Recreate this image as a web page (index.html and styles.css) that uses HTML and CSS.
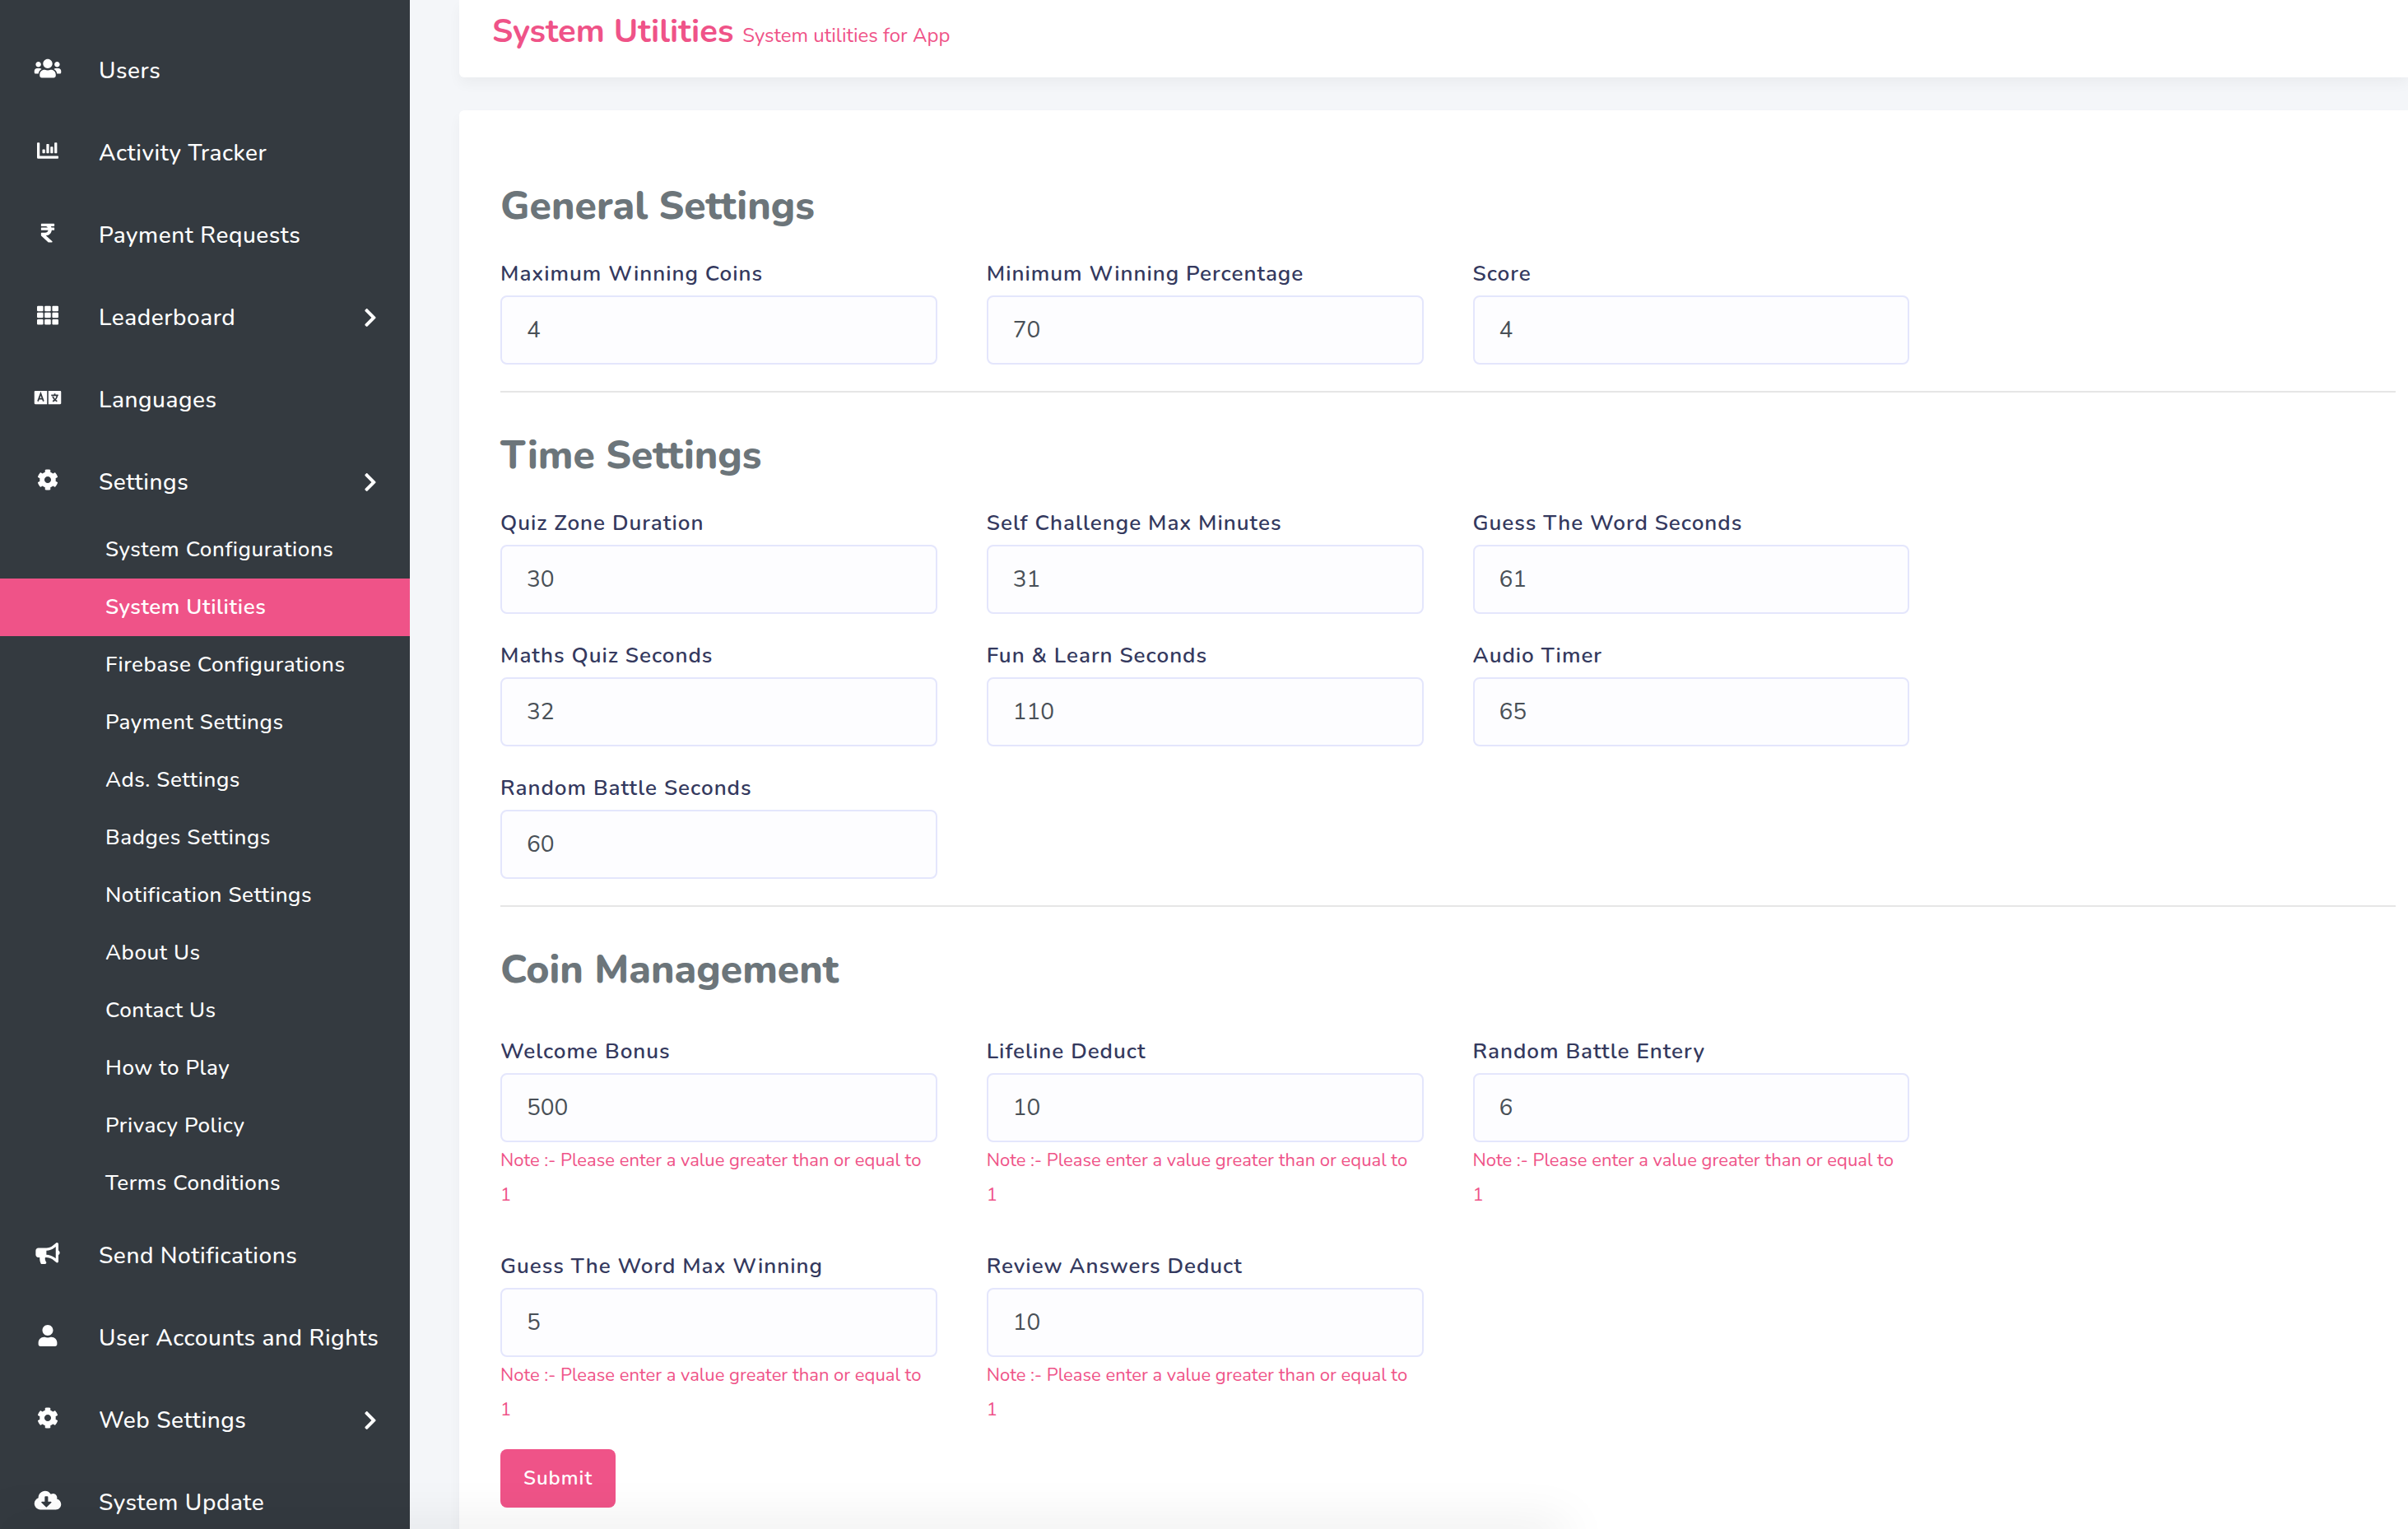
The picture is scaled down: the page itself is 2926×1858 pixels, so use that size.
FILE: index.html
```html
<!DOCTYPE html>
<html lang="en">
<head>
<meta charset="utf-8">
<meta name="viewport" content="width=device-width, initial-scale=1">
<title>System Utilities</title>
<link rel="stylesheet" href="styles.css">
</head>
<body>
<svg class="sprite" aria-hidden="true">
  <symbol id="i-users" viewBox="0 0 640 512"><path d="M96 224c35.3 0 64-28.7 64-64s-28.7-64-64-64-64 28.7-64 64 28.7 64 64 64zm448 0c35.3 0 64-28.7 64-64s-28.7-64-64-64-64 28.7-64 64 28.7 64 64 64zm32 32h-64c-17.6 0-33.5 7.1-45.1 18.6 40.3 22.1 68.9 62 75.1 109.4h66c17.7 0 32-14.3 32-32v-32c0-35.3-28.7-64-64-64zm-256 0c61.9 0 112-50.1 112-112S381.9 32 320 32 208 82.1 208 144s50.1 112 112 112zm76.8 32h-8.3c-20.8 10-43.9 16-68.5 16s-47.6-6-68.5-16h-8.3C179.6 288 128 339.6 128 403.2V432c0 26.5 21.5 48 48 48h288c26.5 0 48-21.5 48-48v-28.8c0-63.6-51.6-115.2-115.2-115.2zm-223.7-13.4C161.5 263.1 145.6 256 128 256H64c-35.3 0-64 28.7-64 64v32c0 17.7 14.3 32 32 32h65.9c6.3-47.4 34.9-87.3 75.2-109.4z"/></symbol>
  <symbol id="i-chart" viewBox="0 0 512 512"><path d="M332.8 320h38.4c6.4 0 12.8-6.4 12.8-12.8V172.8c0-6.4-6.4-12.8-12.8-12.8h-38.4c-6.4 0-12.8 6.4-12.8 12.8v134.4c0 6.4 6.4 12.8 12.8 12.8zm96 0h38.4c6.4 0 12.8-6.4 12.8-12.8V76.8c0-6.4-6.4-12.8-12.8-12.8h-38.4c-6.4 0-12.8 6.4-12.8 12.8v230.4c0 6.4 6.4 12.8 12.8 12.8zm-288 0h38.4c6.4 0 12.8-6.4 12.8-12.8v-70.4c0-6.4-6.4-12.8-12.8-12.8h-38.4c-6.4 0-12.8 6.4-12.8 12.8v70.4c0 6.4 6.4 12.8 12.8 12.8zm96 0h38.4c6.4 0 12.8-6.4 12.8-12.8V108.8c0-6.4-6.4-12.8-12.8-12.8h-38.4c-6.4 0-12.8 6.4-12.8 12.8v198.4c0 6.4 6.4 12.8 12.8 12.8zM496 384H64V80c0-8.84-7.16-16-16-16H16C7.16 64 0 71.16 0 80v336c0 17.67 14.33 32 32 32h464c8.84 0 16-7.16 16-16v-32c0-8.84-7.16-16-16-16z"/></symbol>
  <symbol id="i-rupee" viewBox="0 0 320 512"><path d="M308 96c6.627 0 12-5.373 12-12V44c0-6.627-5.373-12-12-12H12C5.373 32 0 37.373 0 44v44.748c0 6.627 5.373 12 12 12h85.28c27.308 0 48.261 9.958 60.97 27.252H12c-6.627 0-12 5.373-12 12v40c0 6.627 5.373 12 12 12h158.757c-6.217 36.086-32.961 58.632-74.757 58.632H12c-6.627 0-12 5.373-12 12v53.012c0 3.349 1.4 6.546 3.861 8.818l165.052 152.356a12.001 12.001 0 0 0 8.139 3.182h82.562c10.924 0 16.166-13.408 8.139-20.818L116.871 319.906c76.499-2.34 131.144-53.395 138.318-127.906H308c6.627 0 12-5.373 12-12v-40c0-6.627-5.373-12-12-12h-58.69c-3.486-11.541-8.28-22.246-14.252-32H308z"/></symbol>
  <symbol id="i-grid" viewBox="0 0 512 512">
    <rect x="0" y="32" width="149" height="128" rx="24"/><rect x="181" y="32" width="149" height="128" rx="24"/><rect x="363" y="32" width="149" height="128" rx="24"/>
    <rect x="0" y="192" width="149" height="128" rx="24"/><rect x="181" y="192" width="149" height="128" rx="24"/><rect x="363" y="192" width="149" height="128" rx="24"/>
    <rect x="0" y="352" width="149" height="128" rx="24"/><rect x="181" y="352" width="149" height="128" rx="24"/><rect x="363" y="352" width="149" height="128" rx="24"/>
  </symbol>
  <symbol id="i-language" viewBox="0 0 640 512">
    <path d="M24 96h280v320H24c-13 0-24-11-24-24V120c0-13 11-24 24-24zM336 96h280c13 0 24 11 24 24v272c0 13-11 24-24 24H336z"/>
    <g class="cut"><path d="M84 348l68-184 68 184M108 290h88"/><path d="M404 204h168M488 160v44M440 350c60-30 96-78 106-142M438 232c20 52 56 92 106 118"/></g>
  </symbol>
  <symbol id="i-cog" viewBox="0 0 512 512"><path d="M487.4 315.7l-42.6-24.6c4.3-23.2 4.3-47 0-70.2l42.6-24.6c4.9-2.8 7.1-8.6 5.5-14-11.1-35.6-30-67.8-54.7-94.6-3.8-4.1-10-5.1-14.8-2.3L380.8 110c-17.9-15.4-38.5-27.3-60.8-35.1V25.8c0-5.6-3.9-10.5-9.4-11.7-36.7-8.2-74.3-7.8-109.2 0-5.5 1.2-9.4 6.1-9.4 11.7V75c-22.2 7.9-42.8 19.8-60.8 35.1L88.7 85.5c-4.9-2.8-11-1.9-14.8 2.3-24.7 26.7-43.6 58.9-54.7 94.6-1.7 5.4.6 11.2 5.5 14L67.3 221c-4.3 23.2-4.3 47 0 70.2l-42.6 24.6c-4.9 2.8-7.1 8.6-5.5 14 11.1 35.6 30 67.8 54.7 94.6 3.8 4.1 10 5.1 14.8 2.3l42.6-24.6c17.9 15.4 38.5 27.3 60.8 35.1v49.2c0 5.6 3.9 10.5 9.4 11.7 36.7 8.2 74.3 7.8 109.2 0 5.5-1.2 9.4-6.1 9.4-11.7v-49.2c22.2-7.9 42.8-19.8 60.8-35.1l42.6 24.6c4.9 2.8 11 1.9 14.8-2.3 24.7-26.7 43.6-58.9 54.7-94.6 1.5-5.5-.7-11.3-5.6-14.1zM256 336c-44.1 0-80-35.9-80-80s35.9-80 80-80 80 35.9 80 80-35.9 80-80 80z"/></symbol>
  <symbol id="i-bullhorn" viewBox="0 0 576 512"><path d="M576 240c0-23.63-12.95-44.04-32-55.12V32.01C544 23.26 537.02 0 512 0c-7.12 0-14.19 2.38-19.98 7.02l-85.03 68.03C364.28 109.19 310.66 128 256 128H64c-35.35 0-64 28.65-64 64v96c0 35.35 28.65 64 64 64h33.7c-1.39 10.48-2.18 21.14-2.18 32 0 39.77 9.26 77.35 25.56 110.94 5.19 10.69 16.52 17.06 28.4 17.06h74.28c26.05 0 41.69-29.84 25.9-50.56-16.4-21.52-26.15-48.36-26.15-77.44 0-11.11 1.62-21.79 4.41-32H256c54.66 0 108.28 18.81 150.98 52.95l85.03 68.03a32.023 32.023 0 0 0 19.98 7.02c24.92 0 32-22.78 32-32V295.13C563.05 284.04 576 263.63 576 240zm-96 141.42l-33.05-26.44C392.95 311.78 325.12 288 256 288v-96c69.12 0 136.95-23.78 190.95-66.98L480 98.58v282.84z"/></symbol>
  <symbol id="i-user" viewBox="0 0 448 512"><path d="M224 256c70.7 0 128-57.3 128-128S294.7 0 224 0 96 57.3 96 128s57.3 128 128 128zm89.6 32h-16.7c-22.2 10.2-46.9 16-72.9 16s-50.6-5.8-72.9-16h-16.7C60.2 288 0 348.2 0 422.4V464c0 26.5 21.5 48 48 48h352c26.5 0 48-21.5 48-48v-41.6c0-74.2-60.2-134.4-134.4-134.4z"/></symbol>
  <symbol id="i-cloud" viewBox="0 0 640 512"><path d="M537.6 226.6c4.1-10.7 6.4-22.4 6.4-34.6 0-53-43-96-96-96-19.7 0-38.1 6-53.3 16.2C367 64.2 315.3 32 256 32c-88.4 0-160 71.6-160 160 0 2.7.1 5.4.2 8.1C40.2 219.8 0 273.2 0 336c0 79.5 64.5 144 144 144h368c70.7 0 128-57.3 128-128 0-61.9-44-113.6-102.4-125.4zm-132.9 88.7L299.3 420.7c-6.2 6.2-16.4 6.2-22.6 0L171.3 315.3c-10.1-10.1-2.9-27.3 11.3-27.3H248V176c0-8.8 7.2-16 16-16h48c8.8 0 16 7.2 16 16v112h65.4c14.2 0 21.4 17.2 11.3 27.3z"/></symbol>
  <symbol id="i-chevron" viewBox="0 0 320 512"><path d="M285.476 272.971L91.132 467.314c-9.373 9.373-24.569 9.373-33.941 0l-22.667-22.667c-9.357-9.357-9.375-24.522-.04-33.901L188.505 256 34.484 101.255c-9.335-9.379-9.317-24.544.04-33.901l22.667-22.667c9.373-9.373 24.569-9.373 33.941 0L285.475 239.03c9.373 9.372 9.373 24.568.001 33.941z"/></symbol>
</svg>

<div class="app">
  <nav class="sidebar" aria-label="Main">
    <ul class="menu">
      <li><a class="menu-link" href="#"><svg class="icon"><use href="#i-users"/></svg><span>Users</span></a></li>
      <li><a class="menu-link" href="#"><svg class="icon"><use href="#i-chart"/></svg><span>Activity Tracker</span></a></li>
      <li><a class="menu-link" href="#"><svg class="icon"><use href="#i-rupee"/></svg><span>Payment Requests</span></a></li>
      <li><a class="menu-link" href="#"><svg class="icon"><use href="#i-grid"/></svg><span>Leaderboard</span><svg class="chevron"><use href="#i-chevron"/></svg></a></li>
      <li><a class="menu-link" href="#"><svg class="icon"><use href="#i-language"/></svg><span>Languages</span></a></li>
      <li>
        <a class="menu-link" href="#"><svg class="icon"><use href="#i-cog"/></svg><span>Settings</span><svg class="chevron"><use href="#i-chevron"/></svg></a>
        <ul class="submenu">
          <li><a class="submenu-link" href="#">System Configurations</a></li>
          <li><a class="submenu-link active" href="#" aria-current="page">System Utilities</a></li>
          <li><a class="submenu-link" href="#">Firebase Configurations</a></li>
          <li><a class="submenu-link" href="#">Payment Settings</a></li>
          <li><a class="submenu-link" href="#">Ads. Settings</a></li>
          <li><a class="submenu-link" href="#">Badges Settings</a></li>
          <li><a class="submenu-link" href="#">Notification Settings</a></li>
          <li><a class="submenu-link" href="#">About Us</a></li>
          <li><a class="submenu-link" href="#">Contact Us</a></li>
          <li><a class="submenu-link" href="#">How to Play</a></li>
          <li><a class="submenu-link" href="#">Privacy Policy</a></li>
          <li><a class="submenu-link" href="#">Terms Conditions</a></li>
        </ul>
      </li>
      <li><a class="menu-link" href="#"><svg class="icon"><use href="#i-bullhorn"/></svg><span>Send Notifications</span></a></li>
      <li><a class="menu-link" href="#"><svg class="icon"><use href="#i-user"/></svg><span>User Accounts and Rights</span></a></li>
      <li><a class="menu-link" href="#"><svg class="icon"><use href="#i-cog"/></svg><span>Web Settings</span><svg class="chevron"><use href="#i-chevron"/></svg></a></li>
      <li><a class="menu-link" href="#"><svg class="icon"><use href="#i-cloud"/></svg><span>System Update</span></a></li>
    </ul>
  </nav>

  <main class="main">
    <header class="card page-header">
      <h1>System Utilities <small>System utilities for App</small></h1>
    </header>

    <form class="card settings">
      <section class="group">
        <h2>General Settings</h2>
        <div class="fields">
          <div class="field"><label for="max-coins">Maximum Winning Coins</label><input id="max-coins" type="text" value="4"></div>
          <div class="field"><label for="min-percent">Minimum Winning Percentage</label><input id="min-percent" type="text" value="70"></div>
          <div class="field"><label for="score">Score</label><input id="score" type="text" value="4"></div>
        </div>
      </section>
      <hr>
      <section class="group">
        <h2>Time Settings</h2>
        <div class="fields">
          <div class="field"><label for="quiz-zone">Quiz Zone Duration</label><input id="quiz-zone" type="text" value="30"></div>
          <div class="field"><label for="self-challenge">Self Challenge Max Minutes</label><input id="self-challenge" type="text" value="31"></div>
          <div class="field"><label for="guess-word">Guess The Word Seconds</label><input id="guess-word" type="text" value="61"></div>
          <div class="field row-start"><label for="maths-quiz">Maths Quiz Seconds</label><input id="maths-quiz" type="text" value="32"></div>
          <div class="field"><label for="fun-learn">Fun &amp; Learn Seconds</label><input id="fun-learn" type="text" value="110"></div>
          <div class="field"><label for="audio-timer">Audio Timer</label><input id="audio-timer" type="text" value="65"></div>
          <div class="field row-start"><label for="random-battle">Random Battle Seconds</label><input id="random-battle" type="text" value="60"></div>
        </div>
      </section>
      <hr>
      <section class="group coins">
        <h2>Coin Management</h2>
        <div class="fields">
          <div class="field"><label for="welcome">Welcome Bonus</label><input id="welcome" type="text" value="500"><p class="note">Note :- Please enter a value greater than or equal to 1</p></div>
          <div class="field"><label for="lifeline">Lifeline Deduct</label><input id="lifeline" type="text" value="10"><p class="note">Note :- Please enter a value greater than or equal to 1</p></div>
          <div class="field"><label for="battle-entry">Random Battle Entery</label><input id="battle-entry" type="text" value="6"><p class="note">Note :- Please enter a value greater than or equal to 1</p></div>
          <div class="field row-start"><label for="guess-max">Guess The Word Max Winning</label><input id="guess-max" type="text" value="5"><p class="note">Note :- Please enter a value greater than or equal to 1</p></div>
          <div class="field"><label for="review">Review Answers Deduct</label><input id="review" type="text" value="10"><p class="note">Note :- Please enter a value greater than or equal to 1</p></div>
        </div>
      </section>
      <button class="submit" type="submit">Submit</button>
    </form>
  </main>
</div>
<div class="status-shade" aria-hidden="true"></div>
</body>
</html>
```
FILE: styles.css
```css
* { box-sizing: border-box; }

body {
  margin: 0;
  background: #f4f6f9;
  color: #495057;
  font: 28px/42px Nunito, "Open Sans", sans-serif;
}

ul { margin: 0; padding: 0; list-style: none; }
a { color: inherit; text-decoration: none; }
.sprite { position: absolute; width: 0; height: 0; }

.app {
  display: flex;
  height: 100vh;
  overflow: hidden;
}

/* Sidebar */
.sidebar {
  flex: 0 0 498px;
  overflow: hidden;
  padding-top: 39px;
  background: #343a40;
  color: #fff;
  font-weight: 500;
  letter-spacing: 0.02em;
}
.menu { display: flex; flex-direction: column; gap: 6px; }
.menu-link {
  display: flex;
  align-items: center;
  height: 94px;
  padding: 0 40px 0 41px;
  white-space: nowrap;
}
.icon {
  flex: none;
  width: 34px;
  height: 26px;
  margin: 0 45px 6px 0;
  fill: #fff;
}
.cut path { fill: none; stroke: #343a40; stroke-width: 34; }
.chevron {
  width: 16px;
  height: 26px;
  margin-left: auto;
  fill: #fff;
}
.submenu-link {
  display: block;
  padding: 14px 0 14px 128px;
  font-size: 26px;
}
.submenu-link.active { background: #ef5388; font-weight: 600; }

/* Content */
.main {
  flex: 1;
  min-width: 0;
  overflow: hidden;
  padding-left: 60px;
}
.card {
  background: #fff;
  box-shadow: 0 8px 16px rgba(0, 0, 0, .04);
}
.page-header {
  margin-bottom: 40px;
  padding: 8px 40px 26px;
  border-radius: 0 0 0 6px;
}
.page-header h1 {
  margin: 0;
  color: #ef5388;
  font-size: 40px;
  line-height: 60px;
  font-weight: 700;
}
.page-header small { font-size: 24px; line-height: 1; font-weight: 400; }

.settings {
  padding: 87px 15px 80px 50px;
  border-radius: 6px 0 0 6px;
}
h2 {
  margin: 0 0 34px;
  color: #6c757a;
  font-size: 48px;
  line-height: 58px;
  font-weight: 800;
}
hr {
  height: 2px;
  margin: 32px 0 47px;
  border: 0;
  background: #e6e6e6;
}
.fields {
  display: grid;
  grid-template-columns: repeat(4, 1fr);
  gap: 31px 60px;
}
.row-start { grid-column-start: 1; }
.coins h2 { margin-bottom: 51px; }
.coins .fields { row-gap: 46px; }

.field label {
  display: block;
  margin-bottom: 6px;
  color: #34395e;
  font-size: 26px;
  line-height: 40px;
  font-weight: 600;
  letter-spacing: 1px;
}
.field input {
  display: block;
  width: 100%;
  height: 84px;
  padding: 0 30px;
  border: 2px solid #e4e6fc;
  border-radius: 8px;
  background: #fdfdff;
  color: #495057;
  font: inherit;
}
.note {
  margin: 1px 0 0;
  padding-right: 8px;
  color: #ef5388;
  font-size: 22px;
  line-height: 42px;
}
.submit {
  margin-top: 27px;
  padding: 0 28px;
  border: 0;
  border-radius: 8px;
  background: #ef5388;
  color: #fff;
  font: 600 24px/71px Nunito, "Open Sans", sans-serif;
  letter-spacing: 1px;
}

/* Soft shade rising from the bottom edge of the window */
.status-shade {
  position: fixed;
  left: 0;
  bottom: -20px;
  width: 65vw;
  height: 20px;
  box-shadow: 0 0 60px rgba(0, 0, 0, .15);
}
```
